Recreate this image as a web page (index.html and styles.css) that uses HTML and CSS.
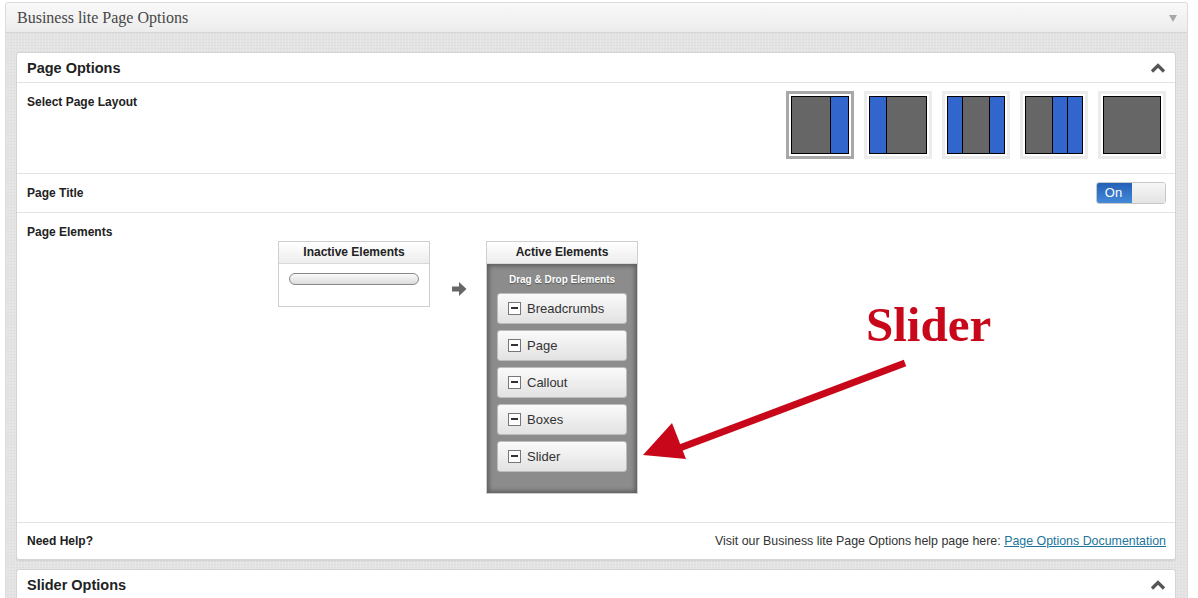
FILE: index.html
```html
<!DOCTYPE html>
<html>
<head>
<meta charset="utf-8">
<link rel="stylesheet" href="styles.css">
</head>
<body>
<div class="wrap">
  <div class="wrap-head">
    <span class="wrap-title">Business lite Page Options</span>
    <span class="wrap-toggle"></span>
  </div>
  <div class="wrap-body">
    <div class="panel">
      <div class="panel-head">
        <span class="panel-title">Page Options</span>
        <svg class="chev" width="16" height="10" viewBox="0 0 16 10"><polyline points="2,8.5 8,2.5 14,8.5" fill="none" stroke="#555" stroke-width="3.2"/></svg>
      </div>
      <div class="row row-layout">
        <div class="label lbl-layout">Select Page Layout</div>
        <div class="thumbs">
          <div class="thumb active"><div class="lay"><span class="g"></span><span class="b w18"></span></div></div>
          <div class="thumb"><div class="lay"><span class="b w17"></span><span class="g"></span></div></div>
          <div class="thumb"><div class="lay"><span class="b w14"></span><span class="g"></span><span class="b w15"></span></div></div>
          <div class="thumb"><div class="lay"><span class="g"></span><span class="b w14"></span><span class="b w15"></span></div></div>
          <div class="thumb"><div class="lay"><span class="g"></span></div></div>
        </div>
      </div>
      <div class="row row-title">
        <div class="label">Page Title</div>
        <div class="toggle"><span class="on">On</span><span class="off"></span></div>
      </div>
      <div class="row row-elements">
        <div class="label lbl-el">Page Elements</div>
        <div class="elements">
          <div class="elbox">
            <div class="elhead">Inactive Elements</div>
            <div class="elbody inactive"><div class="bar"></div></div>
          </div>
          <div class="move">
            <svg width="16" height="16" viewBox="0 0 16 16"><path d="M1 5.5 H8 V1 L15.5 8 L8 15 V10.5 H1 Z" fill="#666"/></svg>
          </div>
          <div class="elbox">
            <div class="elhead">Active Elements</div>
            <div class="elbody active">
              <div class="dd">Drag &amp; Drop Elements</div>
              <div class="item"><span class="minus"></span>Breadcrumbs</div>
              <div class="item"><span class="minus"></span>Page</div>
              <div class="item"><span class="minus"></span>Callout</div>
              <div class="item"><span class="minus"></span>Boxes</div>
              <div class="item"><span class="minus"></span>Slider</div>
            </div>
          </div>
        </div>
        <div class="note">Slider</div>
        <svg class="note-arrow" width="280" height="110" viewBox="0 0 280 110"><line x1="264" y1="4" x2="36" y2="90" stroke="#c8081a" stroke-width="7"/><polygon points="2,96 31,64 45,100" fill="#c8081a"/></svg>
      </div>
      <div class="row row-help">
        <div class="label">Need Help?</div>
        <div class="help">Visit our Business lite Page Options help page here: <a href="#">Page Options Documentation</a></div>
      </div>
    </div>
    <div class="panel panel2">
      <div class="panel-head">
        <span class="panel-title">Slider Options</span>
        <svg class="chev" width="16" height="10" viewBox="0 0 16 10"><polyline points="2,8.5 8,2.5 14,8.5" fill="none" stroke="#555" stroke-width="3.2"/></svg>
      </div>
      <div class="row filler"></div>
    </div>
  </div>
</div>
</body>
</html>
```
FILE: styles.css
```css
html, body { margin: 0; padding: 0; background: #fff; }
body { font-family: "Liberation Sans", Arial, sans-serif; color: #222; overflow: hidden; height: 598px; }

.wrap {
  margin: 2px 0 0 5px;
  width: 1181px;
  border: 1px solid #dcdcdc;
  border-bottom: none;
  border-radius: 3px 3px 0 0;
}
.wrap-head {
  height: 29px;
  border-bottom: 1px solid #d6d6d6;
  background: linear-gradient(#f9f9f9, #ececec);
  display: flex;
  align-items: center;
  justify-content: space-between;
  padding: 0 10px 0 11px;
  border-radius: 3px 3px 0 0;
}
.wrap-title {
  font-family: "Liberation Serif", "Times New Roman", serif;
  font-size: 16px;
  color: #464646;
  margin-top: 1px;
}
.wrap-toggle {
  width: 0; height: 0;
  border-left: 4px solid transparent;
  border-right: 4px solid transparent;
  border-top: 7px solid #a8a8a8;
  margin-top: 2px;
}
.wrap-body {
  background-color: #e3e3e3;
  background-image:
    repeating-linear-gradient(90deg, rgba(255,255,255,0.18) 0 1px, transparent 1px 3px),
    repeating-linear-gradient(0deg, rgba(0,0,0,0.025) 0 1px, transparent 1px 3px);
  padding: 19px 11px 20px 10px;
}
.panel {
  background: #fff;
  border: 1px solid #d4d4d4;
  border-radius: 3px;
  box-shadow: 0 1px 1px rgba(0,0,0,0.08);
}
.panel2 { margin-top: 9px; }
.panel-head {
  height: 29px;
  border-bottom: 1px solid #e3e3e3;
  display: flex;
  align-items: center;
  justify-content: space-between;
  padding: 0 9px 0 10px;
}
.panel-title { font-size: 14.5px; font-weight: bold; color: #222; }
.chev { display: block; }

.row {
  border-bottom: 1px solid #e3e3e3;
  padding: 0 9px 0 10px;
  display: flex;
  justify-content: space-between;
}
.row:last-child { border-bottom: none; }
.filler { height: 40px; }
.label { font-size: 12px; font-weight: bold; color: #222; }

.row-layout { padding-top: 8px; padding-bottom: 14px; height: 68px; }
.lbl-layout { margin-top: 4px; line-height: 14px; }
.thumbs { display: flex; gap: 10px; }
.thumb {
  width: 58px; height: 58px;
  border: 3px solid #ececec;
  padding: 2px;
  background: #fff;
}
.thumb.active { border-color: #a8a8a8; }
.lay {
  width: 56px; height: 56px;
  border: 1px solid #000;
  display: flex;
}
.lay span { display: block; height: 100%; }
.lay .g { flex: 1; background: #666; }
.lay .b { background: #3366cc; }
.lay span + span { border-left: 1px solid #000; }
.w18 { width: 17px; }
.w17 { width: 16px; }
.w14 { width: 14px; }
.w15 { width: 14px; }

.row-title { padding-top: 8px; padding-bottom: 8px; align-items: center; }
.row-title .label { line-height: 22px; }
.toggle {
  width: 68px; height: 20px;
  border: 1px solid #c8c8c8;
  border-radius: 3px;
  display: flex;
  overflow: hidden;
}
.toggle .on {
  width: 35px;
  background: linear-gradient(#2260b8, #4489d8);
  color: #fff;
  font-size: 13px;
  line-height: 20px;
  text-align: center;
  padding-right: 2px;
  box-sizing: border-box;
}
.toggle .off { flex: 1; background: linear-gradient(#f6f6f6, #e4e4e4); }

.row-elements {
  position: relative;
  justify-content: flex-start;
  padding-top: 11px;
  padding-bottom: 28px;
}
.lbl-el { width: 251px; line-height: 16px; flex: none; }
.elements { display: flex; align-items: flex-start; margin-top: 17px; }
.elbox { width: 150px; border: 1px solid #cfcfcf; }
.elhead {
  height: 21px;
  line-height: 21px;
  border-bottom: 1px solid #d8d8d8;
  background: linear-gradient(#ffffff, #ededed);
  font-size: 12px;
  font-weight: bold;
  text-align: center;
  color: #222;
}
.elbody.inactive { height: 42px; padding: 9px 10px 0; box-sizing: border-box; }
.bar {
  height: 12px;
  border: 1px solid #888;
  border-radius: 6px;
  background: linear-gradient(#fafafa, #dcdcdc);
  box-sizing: border-box;
}
.move { width: 56px; display: flex; justify-content: center; padding-top: 40px; }
.move svg { display: block; margin-left: 1px; }
.elbody.active {
  background: #8c8c8c;
  box-shadow: inset 0 0 4px 2px rgba(0,0,0,0.35);
  padding: 10px 10px 21px;
  display: flex;
  flex-direction: column;
  gap: 6px;
}
.dd {
  color: #fff;
  font-size: 10px;
  font-weight: bold;
  text-align: center;
  text-shadow: 0 1px 1px rgba(0,0,0,0.4);
  line-height: 12px;
  margin-bottom: 1px;
}
.item {
  height: 29px;
  border: 1px solid #bdbdbd;
  border-radius: 3px;
  background: linear-gradient(#fafafa, #e2e2e2);
  display: flex;
  align-items: center;
  font-size: 13px;
  color: #333;
  padding-left: 10px;
}
.minus {
  width: 11px; height: 11px;
  border: 1px solid #777;
  background: #fff;
  margin-right: 6px;
  position: relative;
}
.minus::after {
  content: "";
  position: absolute;
  left: 2px; right: 2px; top: 4px;
  height: 2px;
  background: #333;
}
.note {
  position: absolute;
  left: 849px;
  top: 87px;
  font-family: "Liberation Serif", "Times New Roman", serif;
  font-weight: bold;
  font-size: 49px;
  line-height: 49px;
  color: #c8081a;
}
.note-arrow { position: absolute; left: 624px; top: 146px; }

.row-help { align-items: center; height: 36px; }
.help { font-size: 12.4px; color: #333; }
.help a { color: #21759b; }
```
